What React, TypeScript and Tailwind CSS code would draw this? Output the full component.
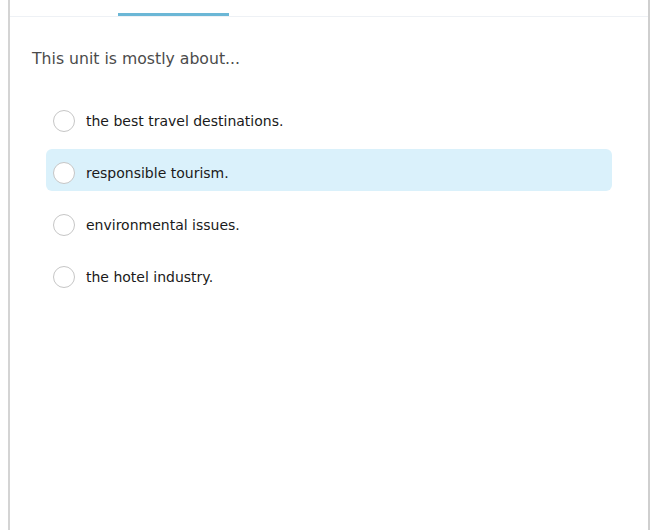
import { useState } from "react";

const options = [
  "the best travel destinations.",
  "responsible tourism.",
  "environmental issues.",
  "the hotel industry.",
];

export default function App() {
  const [selected, setSelected] = useState<number | null>(null);
  const hovered = 1;

  return (
    <div
      className="h-[530px] w-[650px] overflow-hidden bg-white"
      style={{ fontFamily: '"DejaVu Sans", Verdana, sans-serif' }}
    >
      <div className="ml-2 h-full w-[642px] border-x-2 border-l-[#d4d4d4] border-r-[#cfcfcf]">
        {/* tab strip, scrolled mostly out of view */}
        <div className="flex h-[17px] border-b border-[#eef1f5] pl-[108px]">
          <div className="mt-auto h-[3px] w-[111px] bg-[#6bb7d6]" />
        </div>

        <div className="px-[22px] pt-[32px]">
          <p className="text-[15.7px] leading-[20px] text-[#4b4b4b]">This unit is mostly about...</p>

          <div className="mt-[28px] flex w-[580px] flex-col gap-[10px] pl-[14px]">
            {options.map((opt, i) => (
              <button
                key={opt}
                onClick={() => setSelected(i)}
                className={`flex h-[42px] items-center gap-[11px] rounded-[6px] px-[7px] pt-[6px] text-left ${
                  i === hovered ? "bg-[#daf1fb]" : ""
                }`}
              >
                <span
                  className={`h-[22px] w-[22px] shrink-0 rounded-full bg-white ${
                    selected === i ? "border-[6px] border-[#4a9fc4]" : "border border-[#c6c6c6]"
                  }`}
                />
                <span className="text-[14px] text-[#1a1a1a]">{opt}</span>
              </button>
            ))}
          </div>
        </div>
      </div>
    </div>
  );
}
